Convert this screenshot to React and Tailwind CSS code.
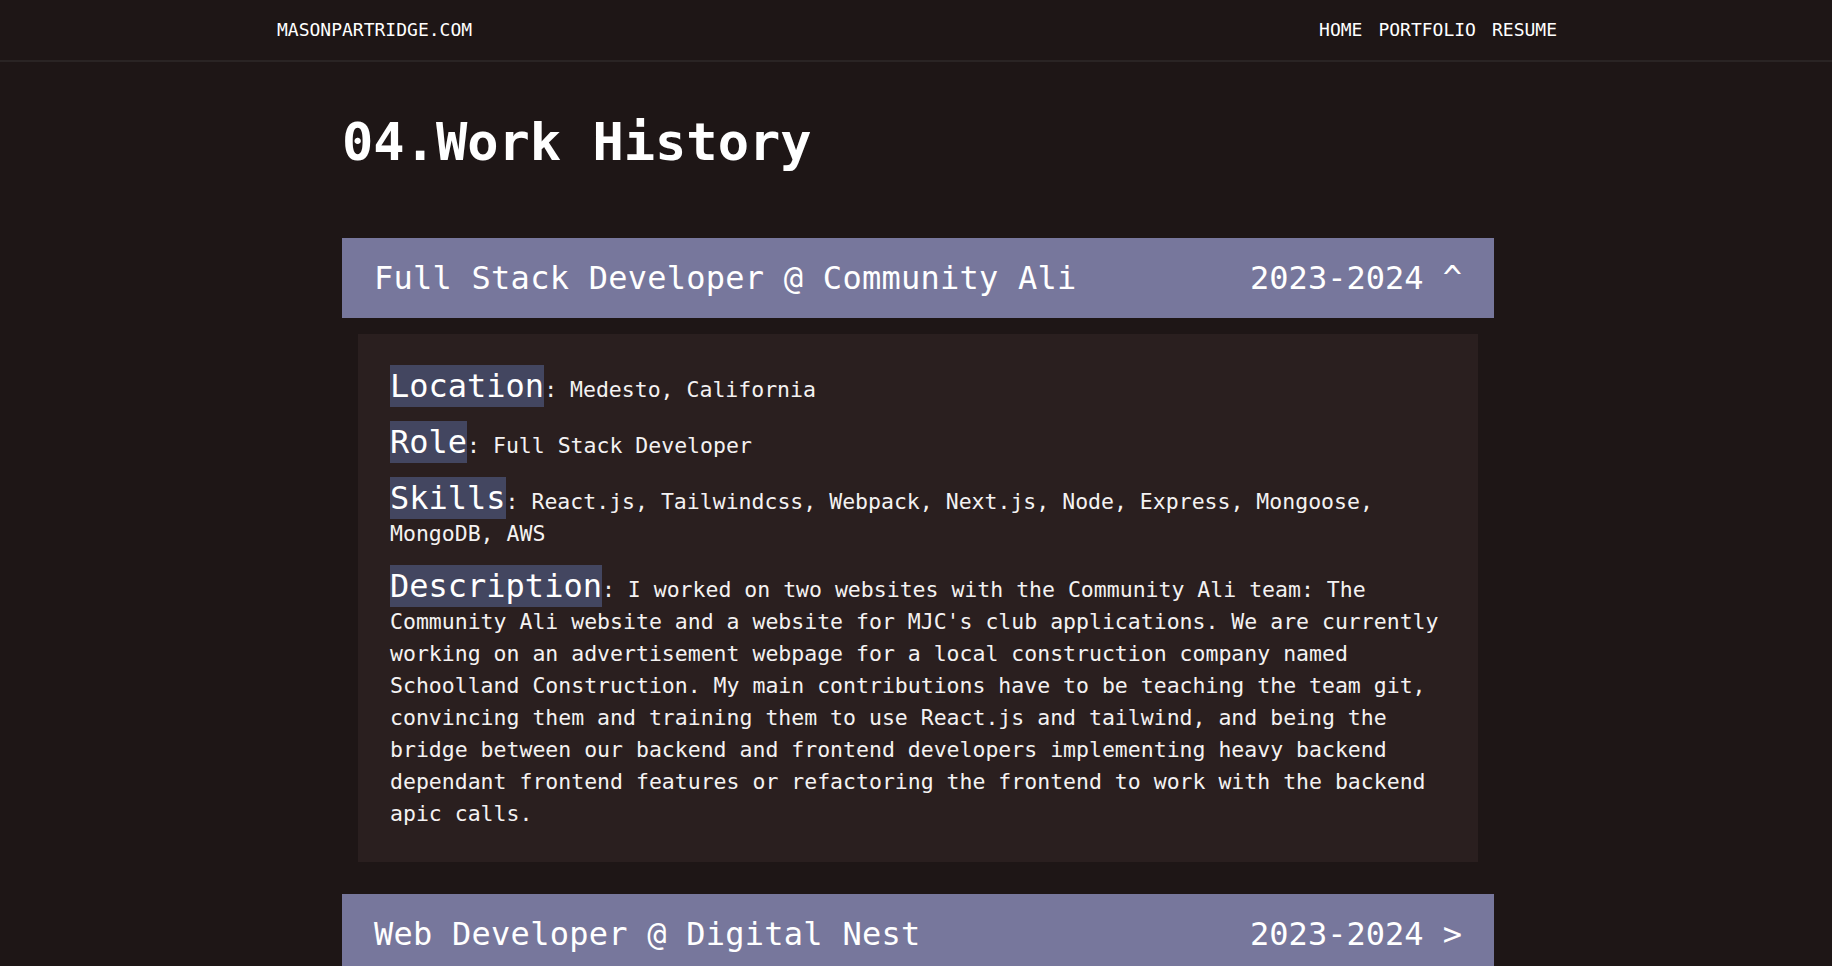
/**
 * Work history page – nav bar plus accordion of jobs.
 */
import { useState } from 'react';

const MONO = { fontFamily: '"DejaVu Sans Mono", "Liberation Mono", monospace' };

const JOBS = [
  {
    id: 1,
    title: 'Full Stack Developer @ Community Ali',
    years: '2023-2024',
    location: 'Medesto, California',
    role: 'Full Stack Developer',
    skills: 'React.js, Tailwindcss, Webpack, Next.js, Node, Express, Mongoose, MongoDB, AWS',
    description:
      "I worked on two websites with the Community Ali team: The Community Ali website and a website for MJC's club applications. We are currently working on an advertisement webpage for a local construction company named Schoolland Construction. My main contributions have to be teaching the team git, convincing them and training them to use React.js and tailwind, and being the bridge between our backend and frontend developers implementing heavy backend dependant frontend features or refactoring the frontend to work with the backend apic calls.",
  },
  {
    id: 2,
    title: 'Web Developer @ Digital Nest',
    years: '2023-2024',
    location: 'Salinas, California',
    role: 'Web Developer',
    skills: 'HTML, CSS, JavaScript, React.js',
    description: 'Built and maintained web pages for the Digital Nest team.',
  },
];

function Field({ label, children }) {
  return (
    <p className="text-[21.5px] leading-8 text-[#f4f2f2]">
      <span className="bg-[#434660] py-[2px] text-[32px] text-white">{label}</span>: {children}
    </p>
  );
}

function JobItem({ job, open, onToggle }) {
  return (
    <div>
      <button
        onClick={onToggle}
        className="flex h-20 w-full items-center justify-between bg-[#77779c] px-8 text-[32px] text-white"
        style={MONO}
      >
        <span className="tracking-[0.25px]">{job.title}</span>
        <span>
          {job.years} {open ? '^' : '>'}
        </span>
      </button>
      {open && (
        <div className="mx-4 mt-4 space-y-5 bg-[#2a1f1f] px-8 pt-9 pb-8">
          <Field label="Location">{job.location}</Field>
          <Field label="Role">{job.role}</Field>
          <Field label="Skills">{job.skills}</Field>
          <Field label="Description">{job.description}</Field>
        </div>
      )}
    </div>
  );
}

export default function App() {
  const [openId, setOpenId] = useState(1);

  return (
    <div className="min-h-screen bg-[#1e1616] text-white" style={MONO}>
      {/* Top nav */}
      <nav className="border-b-2 border-[#2a2424]">
        <div className="mx-auto flex h-[60px] max-w-[1282px] items-center justify-between pb-[2px] pl-[2px] text-[18px]">
          <a href="#" className="text-white">MASONPARTRIDGE.COM</a>
          <div className="flex items-center gap-4">
            <a href="#" className="text-white">HOME</a>
            <a href="#" className="text-white">PORTFOLIO</a>
            <a href="#" className="text-white">RESUME</a>
          </div>
        </div>
      </nav>

      <main className="mx-auto max-w-[1156px] pb-16 pl-1">
        <h1 className="mt-[54px] mb-[70px] text-[52px] leading-none font-bold">04.Work History</h1>

        <div className="space-y-8">
          {JOBS.map((job) => (
            <JobItem
              key={job.id}
              job={job}
              open={openId === job.id}
              onToggle={() => setOpenId(openId === job.id ? null : job.id)}
            />
          ))}
        </div>
      </main>
    </div>
  );
}
